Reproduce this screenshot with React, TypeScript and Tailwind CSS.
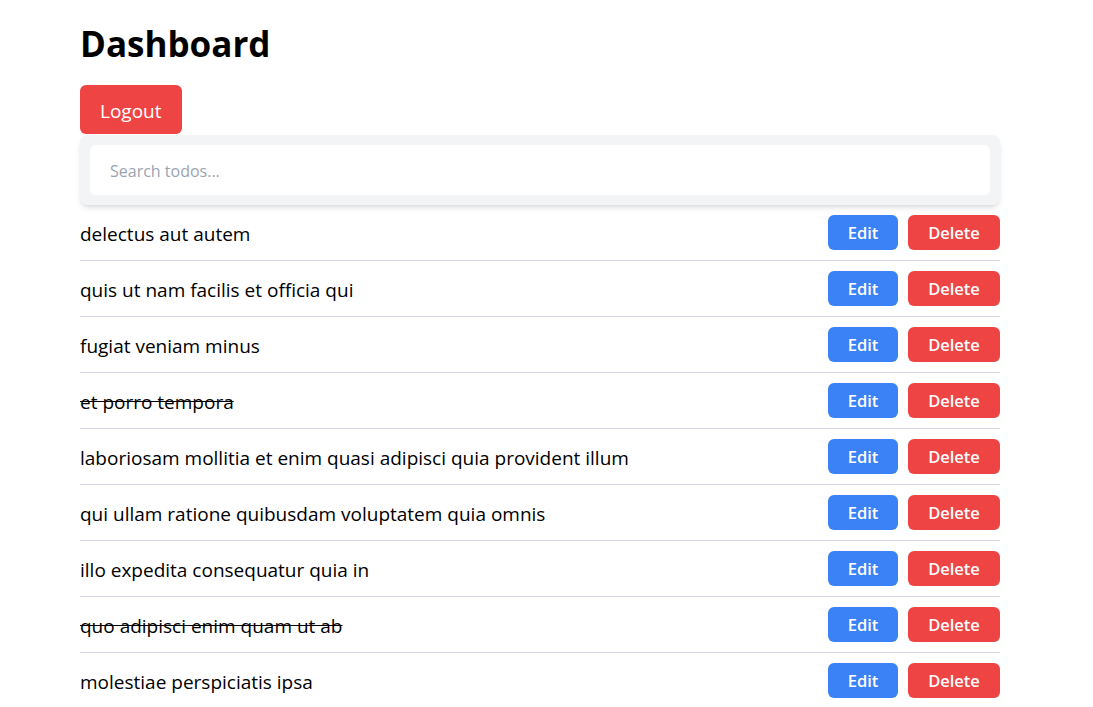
const TODOS = [
  { id: 1, title: 'delectus aut autem', completed: false },
  { id: 2, title: 'quis ut nam facilis et officia qui', completed: false },
  { id: 3, title: 'fugiat veniam minus', completed: false },
  { id: 4, title: 'et porro tempora', completed: true },
  { id: 5, title: 'laboriosam mollitia et enim quasi adipisci quia provident illum', completed: false },
  { id: 6, title: 'qui ullam ratione quibusdam voluptatem quia omnis', completed: false },
  { id: 7, title: 'illo expedita consequatur quia in', completed: false },
  { id: 8, title: 'quo adipisci enim quam ut ab', completed: true },
  { id: 9, title: 'molestiae perspiciatis ipsa', completed: false },
  { id: 10, title: 'illo est ratione doloremque quia maiores aut', completed: true },
]

export default function App() {
  return (
    <div className="min-h-screen bg-white font-['Open_Sans',sans-serif] text-black">
      <div className="ml-20 w-[920px] pt-5">
        <h1 className="text-[35px] font-bold leading-[48px]">Dashboard</h1>
        <button className="mt-[17px] block h-[49px] rounded-md bg-[#ef4444] px-5 pt-[3px] text-[19px] leading-[29px] text-white">
          Logout
        </button>
        <div className="mt-px rounded-lg bg-[#f3f4f6] p-[10px] shadow-md">
          <input
            placeholder="Search todos..."
            className="block h-[50px] w-full rounded-md bg-white px-5 pt-[2px] text-[16px] outline-none placeholder:text-[#9ca3af]"
          />
        </div>
        <ul>
          {TODOS.map((todo) => (
            <li key={todo.id} className="flex items-center justify-between border-b border-[#d1d5db] py-[10px]">
              <span className={todo.completed ? 'pt-[3px] text-[19px] line-through' : 'pt-[3px] text-[19px]'}>{todo.title}</span>
              <div className="flex gap-[10px]">
                <button className="h-[35px] w-[70px] rounded-md bg-[#3b82f6] pt-[2px] text-[16.5px] font-semibold text-white">Edit</button>
                <button className="h-[35px] w-[92px] rounded-md bg-[#ef4444] pt-[2px] text-[16.5px] font-semibold text-white">Delete</button>
              </div>
            </li>
          ))}
        </ul>
      </div>
    </div>
  )
}
